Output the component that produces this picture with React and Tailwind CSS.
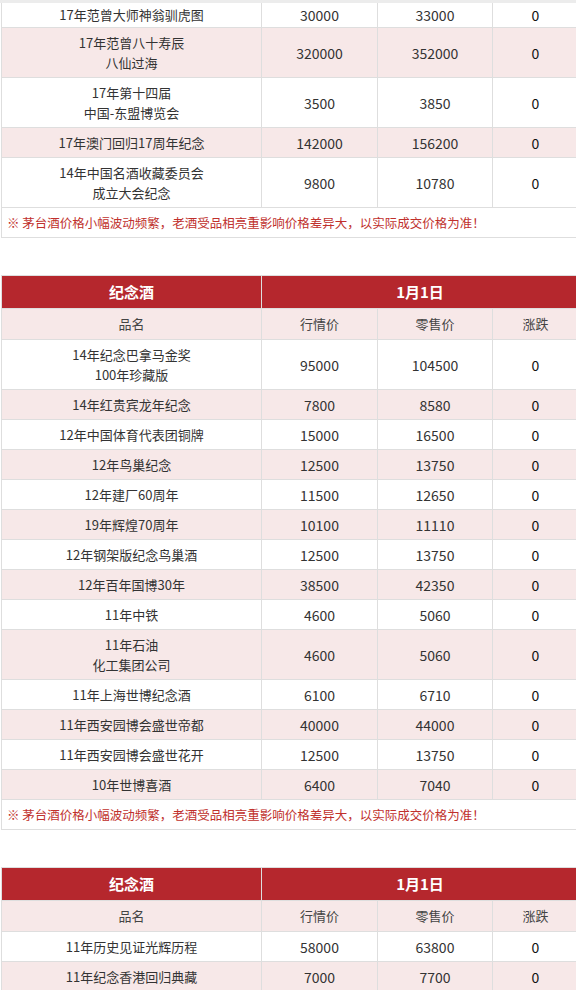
import React from 'react'

const NOTE = '※ 茅台酒价格小幅波动频繁，老酒受品相亮重影响价格差异大，以实际成交价格为准！'

const TABLE_1 = [
  [['17年范曾大师神翁驯虎图'], '30000', '33000', '0'],
  [['17年范曾八十寿辰', '八仙过海'], '320000', '352000', '0'],
  [['17年第十四届', '中国-东盟博览会'], '3500', '3850', '0'],
  [['17年澳门回归17周年纪念'], '142000', '156200', '0'],
  [['14年中国名酒收藏委员会', '成立大会纪念'], '9800', '10780', '0'],
]

const TABLE_2 = [
  [['14年纪念巴拿马金奖', '100年珍藏版'], '95000', '104500', '0'],
  [['14年红贵宾龙年纪念'], '7800', '8580', '0'],
  [['12年中国体育代表团铜牌'], '15000', '16500', '0'],
  [['12年鸟巢纪念'], '12500', '13750', '0'],
  [['12年建厂60周年'], '11500', '12650', '0'],
  [['19年辉煌70周年'], '10100', '11110', '0'],
  [['12年钢架版纪念鸟巢酒'], '12500', '13750', '0'],
  [['12年百年国博30年'], '38500', '42350', '0'],
  [['11年中铁'], '4600', '5060', '0'],
  [['11年石油', '化工集团公司'], '4600', '5060', '0'],
  [['11年上海世博纪念酒'], '6100', '6710', '0'],
  [['11年西安园博会盛世帝都'], '40000', '44000', '0'],
  [['11年西安园博会盛世花开'], '12500', '13750', '0'],
  [['10年世博喜酒'], '6400', '7040', '0'],
]

const TABLE_3 = [
  [['11年历史见证光辉历程'], '58000', '63800', '0'],
  [['11年纪念香港回归典藏'], '7000', '7700', '0'],
]

const cell = 'border border-[#dedede] text-center leading-[20px]'

const Cols = () => (
  <colgroup>
    <col className="w-[260px]" />
    <col className="w-[116px]" />
    <col className="w-[115px]" />
    <col className="w-[86px]" />
  </colgroup>
)

// ── Rows ─────────────────────────────────────────────────────────────────────
const DataRow = ({ row, index, first }) => {
  const [name, market, retail, change] = row
  const bg = index % 2 === 1 ? 'bg-[#f7e8e8]' : 'bg-white'
  const pad = first ? 'pt-[2px] pb-[2px] border-t-0' : 'pt-[5px] pb-[4px]'
  return (
    <tr className={bg}>
      <td className={`${cell} ${pad} text-[13px] text-[#333]`}>
        {name.map((line) => (
          <div key={line}>{line}</div>
        ))}
      </td>
      <td className={`${cell} ${pad} text-[#333]`}>{market}</td>
      <td className={`${cell} ${pad} text-[#333]`}>{retail}</td>
      <td className={`${cell} ${pad} text-[#111]`}>{change}</td>
    </tr>
  )
}

const NoteRow = () => (
  <tr className="bg-white">
    <td colSpan={4} className={`${cell} pt-[5px] pb-[4px] pl-[5px] text-left text-[12.5px] text-[#c0302c]`}>
      {NOTE}
    </td>
  </tr>
)

const HeadRows = () => (
  <>
    <tr className="bg-[#b5272d]">
      <td className={`${cell} py-[6px] text-[15px] font-bold text-white`}>纪念酒</td>
      <td colSpan={3} className={`${cell} py-[6px] text-[15px] font-bold text-white`}>
        1月1日
      </td>
    </tr>
    <tr className="bg-[#f7e8e8] text-[13px] text-[#444]">
      <td className={`${cell} py-[5px]`}>品名</td>
      <td className={`${cell} py-[5px]`}>行情价</td>
      <td className={`${cell} py-[5px]`}>零售价</td>
      <td className={`${cell} py-[5px]`}>涨跌</td>
    </tr>
  </>
)

const PriceTable = ({ rows, head = true, note = true, cutTop = false, className = '' }) => (
  <table className={`ml-px w-[577px] table-fixed border-collapse text-[14px] ${className}`}>
    <Cols />
    <tbody>
      {head && <HeadRows />}
      {rows.map((row, i) => (
        <DataRow key={row[0][0]} row={row} index={i} first={cutTop && i === 0} />
      ))}
      {note && <NoteRow />}
    </tbody>
  </table>
)

// ── Page ─────────────────────────────────────────────────────────────────────
export default function App() {
  return (
    <div
      className="w-[576px] h-[990px] overflow-hidden bg-white"
      style={{ fontFamily: '"Noto Sans CJK SC", "Noto Sans", sans-serif' }}
    >
      <div className="h-[3px] bg-[#ececec]" />
      <PriceTable rows={TABLE_1} head={false} cutTop />
      <PriceTable rows={TABLE_2} className="mt-[37px]" />
      <PriceTable rows={TABLE_3} note={false} className="mt-[37px]" />
    </div>
  )
}
